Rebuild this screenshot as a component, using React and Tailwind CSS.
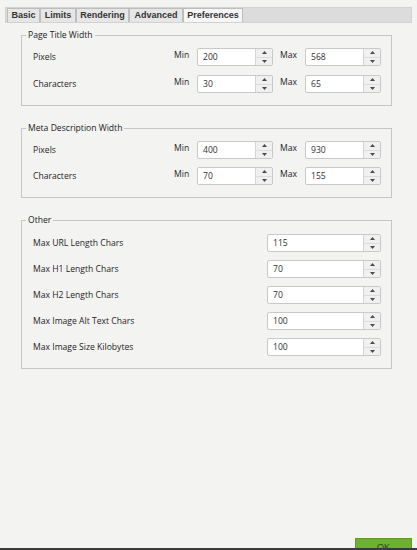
import React from "react";

const tabs = [
	{ name: "Basic", w: "w-[33px]" },
	{ name: "Limits", w: "w-[36px]" },
	{ name: "Rendering", w: "w-[53px]" },
	{ name: "Advanced", w: "w-[54px]" },
	{ name: "Preferences", w: "w-[60px]", active: true },
];

function Spinner() {
	return (
		<div className="w-[17px] h-full flex flex-col border-l border-[#d4d4d4] bg-[#f0f0f0]">
			<div className="flex-1 flex items-center justify-center border-b border-[#dcdcdc]">
				<svg width="5" height="4" viewBox="0 0 5 4">
					<path d="M0 3 L2.5 0 L5 3 Z" fill="#4a4a4a" />
				</svg>
			</div>
			<div className="flex-1 flex items-center justify-center">
				<svg width="5" height="4" viewBox="0 0 5 4">
					<path d="M0 1 L5 1 L2.5 4 Z" fill="#4a4a4a" />
				</svg>
			</div>
		</div>
	);
}

function NumberBox({ value, width }) {
	return (
		<div className={`${width} h-[18px] flex bg-white border border-[#c9c9c9] rounded-[2px] overflow-hidden`}>
			<div className="flex-1 flex items-center pl-[5px] text-[#333]">{value}</div>
			<Spinner />
		</div>
	);
}

function RangeRow({ label, min, max }) {
	return (
		<div className="flex items-center h-[18px]">
			<span className="flex-1">{label}</span>
			<span className="w-[23px] -mt-[3px]">Min</span>
			<NumberBox value={min} width="w-[76px]" />
			<span className="w-[25px] ml-[7px] -mt-[3px]">Max</span>
			<NumberBox value={max} width="w-[76px]" />
		</div>
	);
}

function Group({ title, className, children }) {
	return (
		<fieldset className={`ml-[21px] mr-[25px] border border-[#c6c6c6] pl-[11px] pr-[10px] ${className}`}>
			<legend className="-ml-[7px] px-[2px] leading-[12px] text-[#222]">{title}</legend>
			{children}
		</fieldset>
	);
}

const others = [
	{ label: "Max URL Length Chars", value: "115" },
	{ label: "Max H1 Length Chars", value: "70" },
	{ label: "Max H2 Length Chars", value: "70" },
	{ label: "Max Image Alt Text Chars", value: "100" },
	{ label: "Max Image Size Kilobytes", value: "100" },
];

export default function App() {
	return (
		<div className="w-[417px] h-[550px] bg-[#f3f3f2] flex flex-col text-[8.6px] text-[#1e1e1e] font-['Open_Sans',sans-serif] overflow-hidden">

			{/* Tabs */}
			<div className="mt-[7px] mx-[5px] h-[16px] bg-[#dcdcdc] border border-[#d2d2d2] flex items-end pl-[1px]">
				{tabs.map((t) => (
					<div
						key={t.name}
						className={`${t.w} h-[14px] flex items-center justify-center border border-[#bdbdbd] border-b-0 font-['Liberation_Sans',sans-serif] font-bold text-[9px] text-[#333] ${t.active ? "bg-[#f6f6f6]" : "bg-[#e6e6e6]"}`}
					>
						{t.name}
					</div>
				))}
			</div>

			{/* Page Title Width */}
			<Group title="Page Title Width" className="mt-[6px] pt-[7px] pb-[12px]">
				<div className="flex flex-col gap-[9px]">
					<RangeRow label="Pixels" min="200" max="568" />
					<RangeRow label="Characters" min="30" max="65" />
				</div>
			</Group>

			{/* Meta Description Width */}
			<Group title="Meta Description Width" className="mt-[16px] pt-[7px] pb-[12px]">
				<div className="flex flex-col gap-[8px]">
					<RangeRow label="Pixels" min="400" max="930" />
					<RangeRow label="Characters" min="70" max="155" />
				</div>
			</Group>

			{/* Other */}
			<Group title="Other" className="mt-[16px] pt-[8px] pb-[12px]">
				<div className="flex flex-col gap-[8px]">
					{others.map((o) => (
						<div key={o.label} className="flex items-center h-[18px]">
							<span className="flex-1">{o.label}</span>
							<NumberBox value={o.value} width="w-[114px]" />
						</div>
					))}
				</div>
			</Group>

			<div className="flex-1" />

			{/* Footer */}
			<div className="flex justify-end pr-[5px]">
				<div className="w-[57px] h-[10px] bg-[#6db22f] border border-[#5c9c26] border-b-0 overflow-hidden flex justify-center">
					<span className="mt-[3px] leading-[10px] text-[9px] text-[#2f4a1a] font-['Liberation_Sans',sans-serif]">OK</span>
				</div>
			</div>
			<div className="h-[2px] bg-[#3a3a3a]" />
		</div>
	);
}
